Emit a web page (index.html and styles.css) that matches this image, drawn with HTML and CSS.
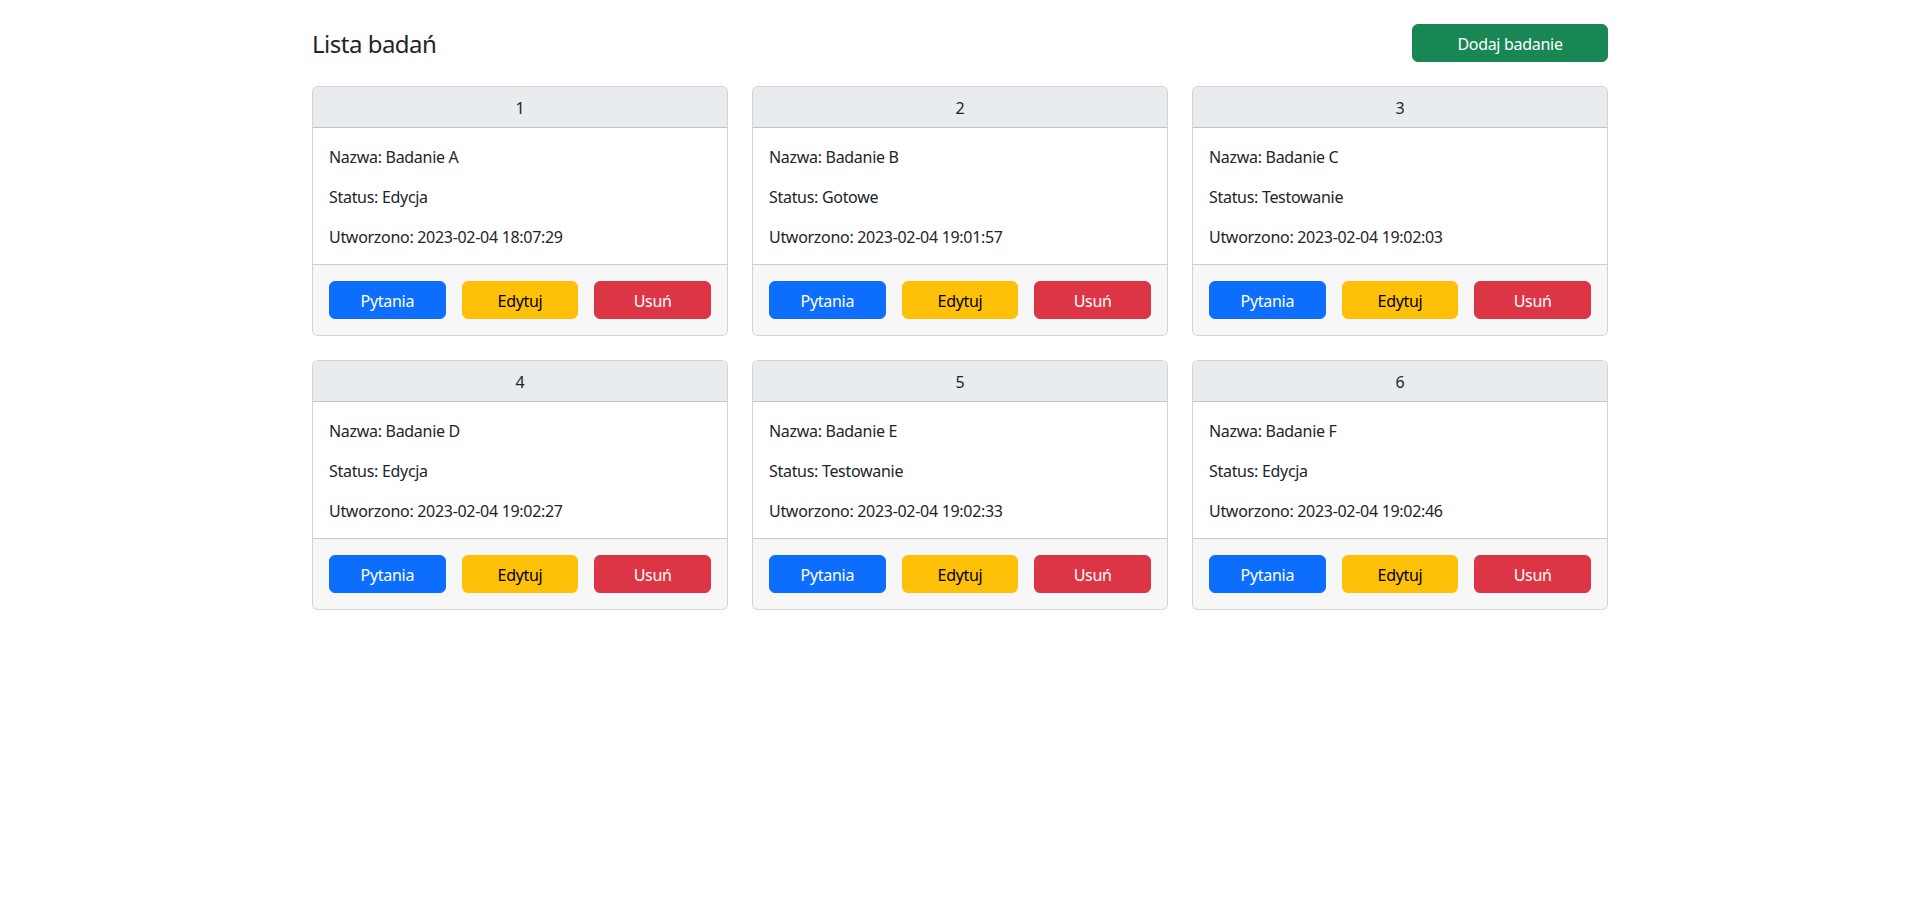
FILE: index.html
```html
<!DOCTYPE html>
<html lang="pl">
<head>
<meta charset="utf-8">
<title>Lista badań</title>
<link rel="stylesheet" href="styles.css">
</head>
<body>
<main class="container">
  <div class="topbar">
    <h4 class="title">Lista badań</h4>
    <button class="btn btn-success btn-add">Dodaj badanie</button>
  </div>
  <div class="grid">
    <div class="card">
      <div class="card-header">1</div>
      <div class="card-body">
        <p>Nazwa: Badanie A</p>
        <p>Status: Edycja</p>
        <p>Utworzono: 2023-02-04 18:07:29</p>
      </div>
      <div class="card-footer">
        <button class="btn btn-primary">Pytania</button>
        <button class="btn btn-warning">Edytuj</button>
        <button class="btn btn-danger">Usuń</button>
      </div>
    </div>
    <div class="card">
      <div class="card-header">2</div>
      <div class="card-body">
        <p>Nazwa: Badanie B</p>
        <p>Status: Gotowe</p>
        <p>Utworzono: 2023-02-04 19:01:57</p>
      </div>
      <div class="card-footer">
        <button class="btn btn-primary">Pytania</button>
        <button class="btn btn-warning">Edytuj</button>
        <button class="btn btn-danger">Usuń</button>
      </div>
    </div>
    <div class="card">
      <div class="card-header">3</div>
      <div class="card-body">
        <p>Nazwa: Badanie C</p>
        <p>Status: Testowanie</p>
        <p>Utworzono: 2023-02-04 19:02:03</p>
      </div>
      <div class="card-footer">
        <button class="btn btn-primary">Pytania</button>
        <button class="btn btn-warning">Edytuj</button>
        <button class="btn btn-danger">Usuń</button>
      </div>
    </div>
    <div class="card">
      <div class="card-header">4</div>
      <div class="card-body">
        <p>Nazwa: Badanie D</p>
        <p>Status: Edycja</p>
        <p>Utworzono: 2023-02-04 19:02:27</p>
      </div>
      <div class="card-footer">
        <button class="btn btn-primary">Pytania</button>
        <button class="btn btn-warning">Edytuj</button>
        <button class="btn btn-danger">Usuń</button>
      </div>
    </div>
    <div class="card">
      <div class="card-header">5</div>
      <div class="card-body">
        <p>Nazwa: Badanie E</p>
        <p>Status: Testowanie</p>
        <p>Utworzono: 2023-02-04 19:02:33</p>
      </div>
      <div class="card-footer">
        <button class="btn btn-primary">Pytania</button>
        <button class="btn btn-warning">Edytuj</button>
        <button class="btn btn-danger">Usuń</button>
      </div>
    </div>
    <div class="card">
      <div class="card-header">6</div>
      <div class="card-body">
        <p>Nazwa: Badanie F</p>
        <p>Status: Edycja</p>
        <p>Utworzono: 2023-02-04 19:02:46</p>
      </div>
      <div class="card-footer">
        <button class="btn btn-primary">Pytania</button>
        <button class="btn btn-warning">Edytuj</button>
        <button class="btn btn-danger">Usuń</button>
      </div>
    </div>
  </div>
</main>
</body>
</html>
```

FILE: styles.css
```css
* { box-sizing: border-box; }

html, body {
  margin: 0;
  padding: 0;
  background: #fff;
}

body {
  font-family: "Segoe UI", "Noto Sans", "Liberation Sans", sans-serif;
  font-size: 16px;
  line-height: 1.5;
  letter-spacing: -0.3px;
  color: #212529;
}

.container {
  max-width: 1320px;
  margin: 0 auto;
  padding: 24px 12px;
}

.topbar {
  display: flex;
  align-items: center;
  justify-content: space-between;
  margin-bottom: 24px;
}

.title {
  margin: 0;
  padding-top: 2px;
  font-size: 24px;
  font-weight: 400;
  line-height: 1.2;
  letter-spacing: -0.5px;
}

.grid {
  display: grid;
  grid-template-columns: repeat(3, 1fr);
  gap: 24px;
}

.card {
  border: 1px solid rgba(0, 0, 0, 0.175);
  border-radius: 6px;
  overflow: hidden;
  background: #fff;
}

.card-header {
  background: #e9ecef;
  text-align: center;
  padding: 9px 16px 7px;
  border-bottom: 1px solid rgba(0, 0, 0, 0.175);
}

.card-body {
  padding: 17px 16px 15px;
}

.card-body p {
  margin: 0 0 16px;
}

.card-body p:last-child {
  margin-bottom: 0;
}

.card-footer {
  background: #f7f7f8;
  border-top: 1px solid rgba(0, 0, 0, 0.175);
  padding: 16px;
  display: grid;
  grid-template-columns: repeat(3, 1fr);
  gap: 16px;
}

.btn {
  font-family: inherit;
  font-size: 16px;
  line-height: 1.5;
  letter-spacing: -0.3px;
  padding: 7px 12px 5px;
  border: 1px solid transparent;
  border-radius: 6px;
  cursor: pointer;
  text-align: center;
}

.btn-add {
  width: 196px;
}

.btn-success { background: #198754; border-color: #198754; color: #fff; }
.btn-primary { background: #0d6efd; border-color: #0d6efd; color: #fff; }
.btn-warning { background: #ffc107; border-color: #ffc107; color: #000; }
.btn-danger  { background: #dc3545; border-color: #dc3545; color: #fff; }
```
